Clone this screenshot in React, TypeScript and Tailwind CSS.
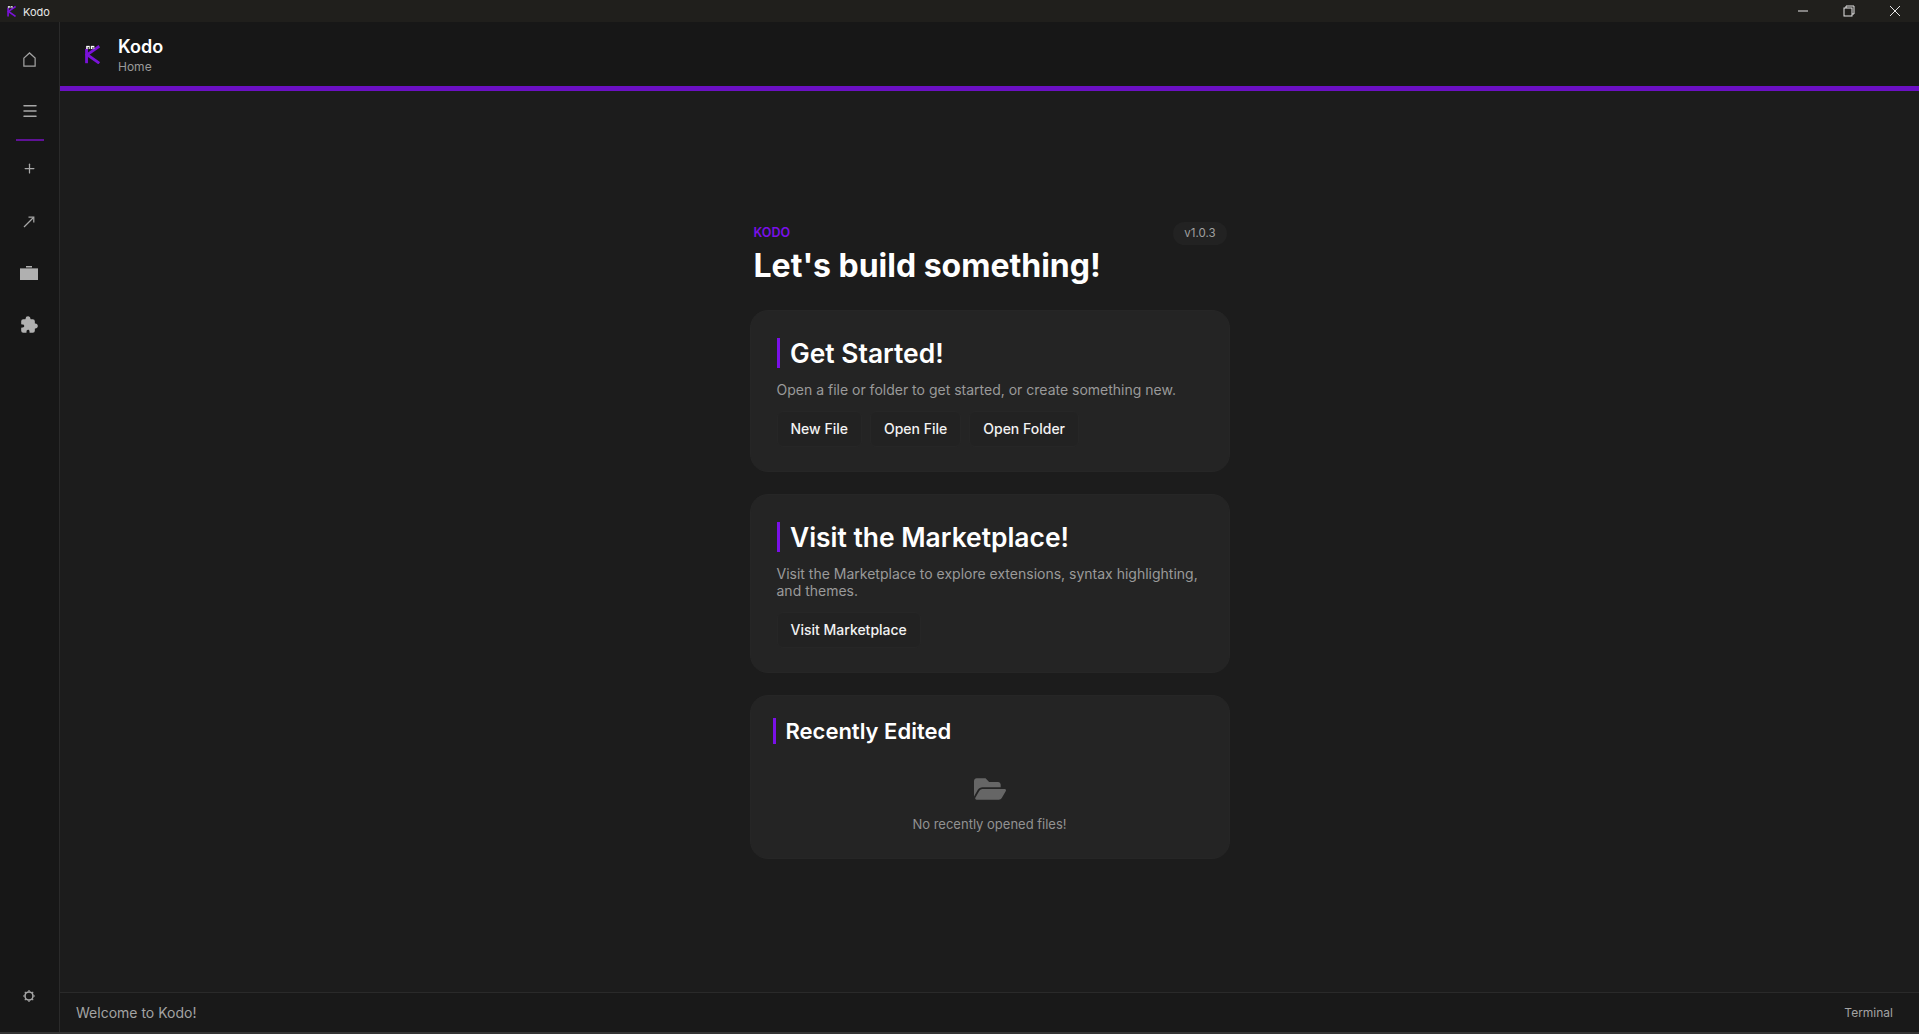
import { Menu, Plus } from "lucide-react";
import { FaFolderOpen } from "react-icons/fa";
import { IoExtensionPuzzle } from "react-icons/io5";

const font = "font-['Inter','Liberation_Sans',sans-serif]";

function KodoLogo({ className }: { className: string }) {
  return (
    <svg viewBox="0 0 24 28" className={className}>
      <path d="M5 3v24" stroke="#7a12d8" strokeWidth="4" fill="none" />
      <path d="M23 3 6 15l17 12" stroke="#7a12d8" strokeWidth="4" fill="none" />
      <path d="M3 1h17l-5 6H3z" fill="#141414" />
      <rect x="4.5" y="2.5" width="5" height="4.5" fill="#fff" />
      <rect x="11" y="2.5" width="5" height="4.5" fill="#fff" />
      <rect x="6.5" y="4.5" width="2" height="2" fill="#141414" />
      <rect x="13" y="4.5" width="2" height="2" fill="#141414" />
    </svg>
  );
}

function HomeIcon() {
  return (
    <svg viewBox="0 0 16 16" className="h-[15px] w-[15px]" fill="none" stroke="#a3a3a3" strokeWidth="1.3">
      <path d="M2 6.5 8 1l6 5.5V15H2z" />
    </svg>
  );
}

function LongArrow() {
  return (
    <svg viewBox="0 0 12 12" className="-ml-[1px] h-[12px] w-[12px]" fill="none" stroke="#a8a8a8" strokeWidth="1.2">
      <path d="M1 11 10.5 1.5" />
      <path d="M5.5 1.2h5.3v5.3" />
    </svg>
  );
}

function Drawer() {
  return (
    <svg viewBox="0 0 18 14" className="-ml-[1px] h-[14px] w-[18px]" fill="#b0b0b0">
      <path d="M6 0h6v1.5H6z" />
      <path d="M0 2h18v12H0z" />
      <path d="M0 2h18v1H0z" fill="#777" />
    </svg>
  );
}

function GearIcon() {
  return (
    <svg viewBox="0 0 14 14" className="-ml-[1px] h-[14px] w-[14px]" fill="none" stroke="#a8a8a8">
      <circle cx="7" cy="7" r="4" strokeWidth="1.6" />
      <path d="M7 1v1.4M7 11.6V13M1 7h1.4M11.6 7H13M2.8 2.8l1 1M10.2 10.2l1 1M2.8 11.2l1-1M10.2 3.8l1-1" strokeWidth="1.2" />
    </svg>
  );
}

function SectionTitle({ children, small }: { children: string; small?: boolean }) {
  return (
    <h2
      className={
        small
          ? "border-l-[3px] border-[#7a10e8] pl-[10px] text-[22px] leading-[26px] font-semibold text-white"
          : "border-l-[3px] border-[#7a10e8] pl-[10.5px] text-[26.4px] leading-[30px] font-semibold text-white"
      }>
      {children}
    </h2>
  );
}

function ActionButton({ children }: { children: string }) {
  return (
    <button className="rounded-md border border-[#262626] bg-[#222222] px-[13px] py-[7px] text-[14px] leading-[20px] font-medium text-[#f2f2f2]">
      {children}
    </button>
  );
}

export default function App() {
  return (
    <div className={`flex h-screen flex-col overflow-hidden bg-[#1c1c1c] ${font}`}>
      <div className="flex h-[22px] flex-none items-center bg-[#201f1c]">
        <KodoLogo className="ml-[6px] h-[12px] w-[10px]" />
        <span className="ml-[7px] pt-[2px] text-[11px] text-[#e8e8e8]">Kodo</span>
        <div className="ml-auto flex items-center">
          <svg viewBox="0 0 12 12" className="mr-[34px] h-[12px] w-[12px]" stroke="#e6e6e6" fill="none">
            <path d="M1 6h10" />
          </svg>
          <svg viewBox="0 0 12 12" className="mr-[34px] h-[12px] w-[12px]" stroke="#e6e6e6" fill="none">
            <rect x="1" y="3" width="8" height="8" />
            <path d="M3 3V1h8v8H9" />
          </svg>
          <svg viewBox="0 0 12 12" className="mr-[18px] h-[12px] w-[12px]" stroke="#e6e6e6" fill="none">
            <path d="M1 1l10 10M11 1 1 11" />
          </svg>
        </div>
      </div>

      <div className="flex min-h-0 flex-1 border-b-2 border-[#333333]">
        <aside className="flex w-[60px] flex-none flex-col items-center border-r border-[#2a2a2a] bg-[#171717] text-[#a8a8a8]">
          <div className="mt-[30px] flex h-[15px] items-center">
            <HomeIcon />
          </div>
          <div className="mt-[36px] flex h-[15px] items-center">
            <Menu size={18} />
          </div>
          <div className="mt-[21px] h-[2px] w-[28px] bg-[#5f1296]" />
          <div className="mt-[20px] flex h-[15px] items-center">
            <Plus size={15} />
          </div>
          <div className="mt-[38px] flex h-[15px] items-center">
            <LongArrow />
          </div>
          <div className="mt-[36px] flex h-[15px] items-center">
            <Drawer />
          </div>
          <div className="mt-[37px] flex h-[15px] items-center text-[#b0b0b0]">
            <IoExtensionPuzzle size={19} />
          </div>
          <div className="mt-auto mb-[29px] flex h-[15px] items-center">
            <GearIcon />
          </div>
        </aside>

        <div className="flex min-w-0 flex-1 flex-col">
          <header className="flex h-[64px] flex-none items-center bg-[#171717]">
            <KodoLogo className="ml-[23px] h-[20px] w-[17px]" />
            <div className="ml-[18px] pt-[4px]">
              <div className="text-[18px] leading-[22px] font-semibold text-white">Kodo</div>
              <div className="text-[12px] leading-[18px] text-[#9a9a9a]">Home</div>
            </div>
          </header>
          <div className="h-[5px] flex-none bg-[#6b10c4]" />

          <main className="flex flex-1 flex-col items-center pt-[134px]">
            <div className="w-[480px]">
              <div className="flex items-start justify-between pr-[3px] pl-[4px]">
                <div>
                  <div className="text-[12.5px] leading-[16px] font-semibold text-[#7a10e8]">KODO</div>
                  <h1 className="mt-[7px] text-[32px] leading-[36px] font-bold text-white">Let's build something!</h1>
                </div>
                <div className="-mt-[3px] rounded-full bg-[#222222] px-[11px] py-[3px] text-[11.5px] leading-[17px] text-[#a0a0a0]">
                  v1.0.3
                </div>
              </div>

              <section className="mt-[26px] h-[162px] rounded-[18px] border border-[#262626] bg-[#242424] px-[26px] pt-[27px]">
                <SectionTitle>Get Started!</SectionTitle>
                <p className="mt-[13px] text-[14px] leading-[17px] text-[#9a9a9a]">
                  Open a file or folder to get started, or create something new.
                </p>
                <div className="mt-[12.5px] flex gap-[8px]">
                  <ActionButton>New File</ActionButton>
                  <ActionButton>Open File</ActionButton>
                  <ActionButton>Open Folder</ActionButton>
                </div>
              </section>

              <section className="mt-[22px] h-[179px] rounded-[18px] border border-[#262626] bg-[#242424] px-[26px] pt-[27px]">
                <SectionTitle>Visit the Marketplace!</SectionTitle>
                <p className="mt-[13px] text-[14px] leading-[17px] text-[#9a9a9a]">
                  Visit the Marketplace to explore extensions, syntax highlighting, and themes.
                </p>
                <div className="mt-[12.5px] flex">
                  <ActionButton>Visit Marketplace</ActionButton>
                </div>
              </section>

              <section className="mt-[22px] h-[164px] rounded-[18px] border border-[#262626] bg-[#242424] px-[22px] pt-[22px]">
                <SectionTitle small>Recently Edited</SectionTitle>
                <div className="mt-[29px] flex flex-col items-center">
                  <FaFolderOpen size={32} className="text-[#666666]" />
                  <p className="mt-[10px] text-[13px] leading-[18px] text-[#929292]">No recently opened files!</p>
                </div>
              </section>
            </div>
          </main>

          <footer className="flex h-[40px] flex-none items-center justify-between border-t border-[#2a2a2a] bg-[#191919] pr-[26px] pl-[16px]">
            <span className="text-[14px] text-[#a3a3a3]">Welcome to Kodo!</span>
            <span className="text-[12px] text-[#a3a3a3]">Terminal</span>
          </footer>
        </div>
      </div>
    </div>
  );
}
